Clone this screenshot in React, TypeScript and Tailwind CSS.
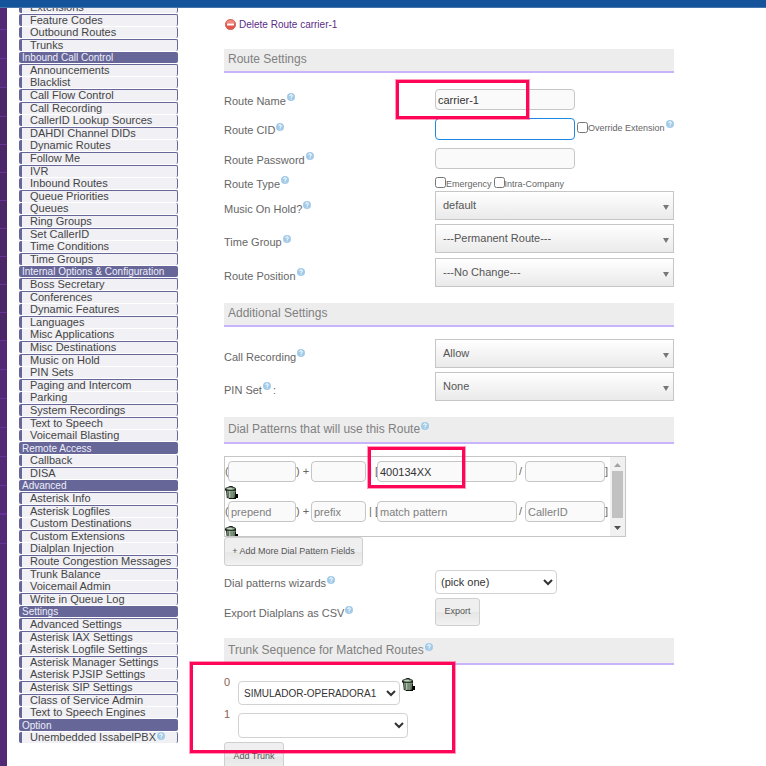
import type { ReactNode } from "react";

type Kind = "head" | "tall-head" | "item" | "flat";

const MENU: [Kind, string][] = [
  ["item", "Extensions"],
  ["item", "Feature Codes"],
  ["flat", "Outbound Routes"],
  ["item", "Trunks"],
  ["head", "Inbound Call Control"],
  ["item", "Announcements"],
  ["flat", "Blacklist"],
  ["item", "Call Flow Control"],
  ["item", "Call Recording"],
  ["flat", "CallerID Lookup Sources"],
  ["item", "DAHDI Channel DIDs"],
  ["flat", "Dynamic Routes"],
  ["item", "Follow Me"],
  ["item", "IVR"],
  ["flat", "Inbound Routes"],
  ["item", "Queue Priorities"],
  ["flat", "Queues"],
  ["item", "Ring Groups"],
  ["item", "Set CallerID"],
  ["flat", "Time Conditions"],
  ["item", "Time Groups"],
  ["head", "Internal Options & Configuration"],
  ["item", "Boss Secretary"],
  ["item", "Conferences"],
  ["flat", "Dynamic Features"],
  ["item", "Languages"],
  ["flat", "Misc Applications"],
  ["item", "Misc Destinations"],
  ["item", "Music on Hold"],
  ["flat", "PIN Sets"],
  ["item", "Paging and Intercom"],
  ["flat", "Parking"],
  ["item", "System Recordings"],
  ["item", "Text to Speech"],
  ["flat", "Voicemail Blasting"],
  ["tall-head", "Remote Access"],
  ["flat", "Callback"],
  ["item", "DISA"],
  ["head", "Advanced"],
  ["item", "Asterisk Info"],
  ["item", "Asterisk Logfiles"],
  ["flat", "Custom Destinations"],
  ["item", "Custom Extensions"],
  ["flat", "Dialplan Injection"],
  ["item", "Route Congestion Messages"],
  ["item", "Trunk Balance"],
  ["flat", "Voicemail Admin"],
  ["item", "Write in Queue Log"],
  ["head", "Settings"],
  ["item", "Advanced Settings"],
  ["item", "Asterisk IAX Settings"],
  ["flat", "Asterisk Logfile Settings"],
  ["item", "Asterisk Manager Settings"],
  ["flat", "Asterisk PJSIP Settings"],
  ["item", "Asterisk SIP Settings"],
  ["item", "Class of Service Admin"],
  ["flat", "Text to Speech Engines"],
  ["tall-head", "Option"],
  ["flat", "Unembedded IssabelPBX"],
];

function Help() {
  return (
    <svg className="mb-[3px] ml-px inline-block h-2 w-2 shrink-0 align-baseline" viewBox="0 0 8 8" aria-hidden="true">
      <circle cx="4" cy="4" r="4" fill="#a3cbe8" />
      <path d="M2.6 3.1 Q2.7 1.8 4 1.8 Q5.4 1.8 5.4 3 Q5.4 3.7 4.1 4.2 V4.9 M4.1 5.6 V6.5" fill="none" stroke="#fff" strokeWidth="1" />
    </svg>
  );
}

function Trash() {
  return (
    <svg className="block h-[13px] w-[13px]" viewBox="0 0 13 13" aria-hidden="true">
      <path d="M9 6 h2 v2 h2 v4 h-2 v1 H4 v-1 h5z" fill="#000" />
      <path d="M1 4 H10.8 L10.4 12 Q6 13.5 1.8 12 Z" fill="#1b211b" />
      <path d="M2 4.6 H9.9 L9.5 11.4 Q5.8 12.8 2.6 11.4 Z" fill="#86a186" />
      <path d="M3.6 5.5 V11.5 M5.9 5.5 V12 M8.2 5.5 V11.5" stroke="#4a5c4a" strokeWidth="0.7" />
      <path d="M4.8 5.2 V11.6" stroke="#c6d8c3" strokeWidth="0.9" />
      <path d="M0 3 Q0 1.4 3 1 Q4 0 6 0 Q8 0 8.5 1 Q11 1.4 11 3 V4.6 H0 Z" fill="#111611" />
      <path d="M1 3 Q1.5 1.2 5.5 1.2 Q9.6 1.2 10 3 Q9 4 5.5 4 Q2 4 1 3Z" fill="#8ea58c" />
      <path d="M2.6 2.4 H7" stroke="#d5e2d2" strokeWidth="0.8" />
    </svg>
  );
}

function Menu() {
  return (
    <nav className="w-[159px] shrink-0 pt-px">
      <ul>
        {MENU.map(([kind, text]) =>
          kind === "head" || kind === "tall-head" ? (
            <li
              key={text}
              className={
                "mb-px flex items-center rounded-xs bg-[#666699] pl-[3px] text-[10px] whitespace-nowrap text-[#eeeef8] " +
                (kind === "head" ? "h-[11px]" : "h-3")
              }
            >
              {text}
            </li>
          ) : (
            <li
              key={text}
              className={
                "mb-px flex items-center rounded-xs border-r border-l-3 border-[#666699] bg-[#f0f0f5] pl-2 text-[11px] whitespace-nowrap text-[#444] " +
                (kind === "item" ? "h-3 border-t" : "h-[11px]")
              }
            >
              <a href="#" className="leading-[11px]">
                {text}
              </a>
              {text.startsWith("Unembedded") && <Help />}
            </li>
          ),
        )}
      </ul>
    </nav>
  );
}

function Heading({ children, tall }: { children: ReactNode; tall?: boolean }) {
  return (
    <h5
      className={
        "border-b-2 border-[#c8b4fa] bg-[#ededed] pl-1 text-[12px] text-[#808080] " +
        (tall ? "h-[27px] leading-[25px]" : "h-6 leading-[20px]")
      }
    >
      {children}
    </h5>
  );
}

function Row({
  id,
  label,
  size,
  after,
  children,
}: {
  id: string;
  label: string;
  size: string;
  after?: string;
  children: ReactNode;
}) {
  return (
    <div className={"grid grid-cols-[211px_1fr] " + size}>
      <label htmlFor={id} className="flex items-center pt-0.5 leading-3">
        <span>{label}</span>
        <span className="-mt-0.5">
          <Help />
        </span>
        {after && <span className="pl-0.5">{after}</span>}
      </label>
      <div className="flex items-center">{children}</div>
    </div>
  );
}

const field =
  "h-[21px] rounded border border-[#c6c6c6] bg-[#fafafa] px-0.5 text-[11px] text-[#333] placeholder:text-[#808080] outline-none ";

function Picker({ id, value }: { id: string; value: string }) {
  return (
    <div className="grid w-full self-start">
      <select
        id={id}
        className="col-start-1 row-start-1 h-[29px] w-full appearance-none border border-[#c6c6c6] bg-linear-to-b from-white to-[#eaeaea] pl-[7px] text-[11px] text-[#555]"
      >
        <option>{value}</option>
      </select>
      <svg className="pointer-events-none col-start-1 row-start-1 mt-1 mr-[5px] h-[5px] w-1.5 self-center justify-self-end" viewBox="0 0 6 5" aria-hidden="true">
        <path d="M0 0 H6 L3 5Z" fill="#777" />
      </svg>
    </div>
  );
}

const plain = "rounded border border-[#d2d2d2] bg-white px-px text-[#333] ";
const button =
  "block rounded-[3px] border border-[#cfcfcf] bg-linear-to-b from-[#efefef] from-50% via-[#e6e6e6] via-50% to-[#f1f1f1] text-[9px] text-[#555] ";
const checkbox = "mb-1 h-[11px] w-[11px]";

function Pattern({ value, hints }: { value?: string; hints?: string[] }) {
  return (
    <div className="h-10 shrink-0">
      <div className="flex items-center whitespace-pre">
        <span className="w-[3px]">(</span>
        <input aria-label="prepend" placeholder={hints?.[0]} className={field + "w-[68px]"} />
        <span className="w-[15px]">{") +"}</span>
        <input aria-label="prefix" placeholder={hints?.[1]} className={field + "w-[55px]"} />
        <span className="w-[11px] pl-[3px]">{"| ["}</span>
        <input aria-label="match pattern" defaultValue={value} placeholder={hints?.[2]} className={field + "w-[140px]"} />
        <span className="w-2 pl-0.5">/</span>
        <input aria-label="CallerID" placeholder={hints?.[3]} className={field + "w-20"} />
        <span>]</span>
      </div>
      <button aria-label="Delete pattern" className="mt-1 block">
        <Trash />
      </button>
    </div>
  );
}

const marker = "pointer-events-none absolute border-3 border-[#ff0558] ring-1 ring-[#ff0558]/40 ";
const RAIL = [22, 29, 29, 29, 28, 28, 28, 28, 28, 28, 28, 28, 29, 29, 29, 29, 29, 29, 29];

export default function App() {
  return (
    <div className="relative h-screen overflow-hidden bg-white font-['Liberation_Sans',Arial,sans-serif] text-[11px] text-[#666]">
      <header className="absolute inset-x-0 top-0 z-10 h-2 border-b border-[#4577ae] bg-[#15539b]" />
      <div className="flex items-start">
        <aside className="mr-3 h-screen w-[7px] shrink-0 bg-[#512975] pt-2">
          {RAIL.map((height, i) => (
            <div
              key={i}
              className={
                "border-[#66329a] " +
                (i === 17 ? "border-b-2 " : "border-b ") +
                (i > 2 && i < 12 ? "bg-[#4b2769]" : "bg-[#512975]")
              }
              style={{ height }}
            />
          ))}
        </aside>
        <Menu />
        <main className="ml-[46px] max-w-[450px] flex-1 pt-[17px]">
          <a href="#" className="ml-px flex h-3.5 items-center gap-[3px] text-[10px] text-[#5b2d86]">
            <svg className="h-[11px] w-[11px]" viewBox="0 0 11 11" aria-hidden="true">
              <circle cx="5.5" cy="5.5" r="5.2" fill="#e0584c" stroke="#c9574f" strokeWidth="0.6" />
              <path d="M1.2 4.5 A4.4 4.4 0 0 1 9.8 4.5Z" fill="#f08a80" />
              <rect x="2" y="4.4" width="7" height="2.2" rx="0.5" fill="#fff" />
            </svg>
            <span>Delete Route carrier-1</span>
          </a>

          <section className="pt-[18px]">
            <Heading>Route Settings</Heading>
            <div className="pt-3">
              <Row id="name" label="Route Name" size="h-[29px]">
                <input id="name" defaultValue="carrier-1" className={field + "w-[140px]"} />
              </Row>
              <Row id="cid" label="Route CID" size="h-[30px]">
                <input id="cid" className="h-[22px] w-[140px] rounded border border-[#1e88e5] bg-white px-0.5 text-[11px] outline-none" />
                <label className="flex items-center pl-0.5 text-[9px] whitespace-nowrap">
                  <input type="checkbox" className={checkbox} />
                  Override Extension
                  <span className="-mt-0.5">
                    <Help />
                  </span>
                </label>
              </Row>
              <Row id="password" label="Route Password" size="h-[29px]">
                <input id="password" className={field + "w-[140px]"} />
              </Row>
              <Row id="emergency" label="Route Type" size="h-[18px]">
                <label className="flex items-center pt-1 pr-0.5 text-[9px]">
                  <input id="emergency" type="checkbox" className={checkbox} />
                  Emergency
                </label>
                <label className="flex items-center pt-1 text-[9px] whitespace-nowrap">
                  <input type="checkbox" className={checkbox} />
                  Intra-Company
                </label>
              </Row>
              <Row id="music" label="Music On Hold?" size="h-[33px]">
                <Picker id="music" value="default" />
              </Row>
              <Row id="time" label="Time Group" size="h-[34px]">
                <Picker id="time" value="---Permanent Route---" />
              </Row>
              <Row id="position" label="Route Position" size="h-[33px]">
                <Picker id="position" value="---No Change---" />
              </Row>
            </div>
          </section>

          <section className="pt-3">
            <Heading>Additional Settings</Heading>
            <div className="pt-3">
              <Row id="recording" label="Call Recording" size="h-[33px]">
                <Picker id="recording" value="Allow" />
              </Row>
              <Row id="pin" label="PIN Set" after=":" size="h-[33px]">
                <Picker id="pin" value="None" />
              </Row>
            </div>
          </section>

          <section className="pt-3">
            <Heading tall>
              Dial Patterns that will use this Route
              <Help />
            </Heading>
            <div className="mt-3 flex h-[81px] max-w-[402px] border border-[#c6c6c6]">
              <div className="flex-1 overflow-hidden pt-1">
                <Pattern value="400134XX" />
                <Pattern hints={["prepend", "prefix", "match pattern", "CallerID"]} />
              </div>
              <div className="flex w-[15px] shrink-0 flex-col items-center justify-between bg-[#f1f1f1] py-1.5">
                <svg className="h-1 w-[7px]" viewBox="0 0 7 4" aria-hidden="true">
                  <path d="M0 4 L3.5 0 L7 4Z" fill="#a3a3a3" />
                </svg>
                <div className="mb-1 h-[47px] w-[11px] bg-[#c1c1c1]" />
                <svg className="h-1 w-[7px]" viewBox="0 0 7 4" aria-hidden="true">
                  <path d="M0 0 L3.5 4 L7 0Z" fill="#505050" />
                </svg>
              </div>
            </div>
            <button className={button + "h-[29px] w-[139px]"}>+ Add More Dial Pattern Fields</button>
            <div className="pt-0.5">
              <Row id="wizard" label="Dial patterns wizards" size="h-7">
                <select id="wizard" className={plain + "h-6 w-[122px] text-[11px]"}>
                  <option>(pick one)</option>
                </select>
              </Row>
              <Row id="export" label="Export Dialplans as CSV" size="h-8">
                <button id="export" className={button + "h-7 w-[45px]"}>
                  Export
                </button>
              </Row>
            </div>
          </section>

          <section className="pt-2.5">
            <Heading tall>
              Trunk Sequence for Matched Routes
              <Help />
            </Heading>
            <div className="flex h-8 items-start pt-3">
              <label htmlFor="trunk0" className="w-3.5 leading-[11px] text-[#8a6252]">
                0
              </label>
              <select id="trunk0" className={plain + "mt-1 h-6 w-[162px] shrink-0 text-[10px]"}>
                <option>SIMULADOR-OPERADORA1</option>
              </select>
              <button aria-label="Delete trunk" className="pt-px pl-0.5">
                <Trash />
              </button>
            </div>
            <div className="flex h-[45px] items-start pt-3">
              <label htmlFor="trunk1" className="w-3.5 leading-[11px] text-[#8a6252]">
                1
              </label>
              <select id="trunk1" className={plain + "mt-1 h-[25px] w-[170px] text-[10px]"}>
                <option></option>
              </select>
            </div>
            <button className={button + "h-[29px] w-[60px]"}>Add Trunk</button>
          </section>
        </main>
      </div>
      <div className={marker + "top-20 left-[396px] h-[39px] w-[133px]"} />
      <div className={marker + "top-[447px] left-[368px] h-[41px] w-[97px]"} />
      <div className={marker + "top-[662px] left-[190px] h-[91px] w-[265px]"} />
    </div>
  );
}
